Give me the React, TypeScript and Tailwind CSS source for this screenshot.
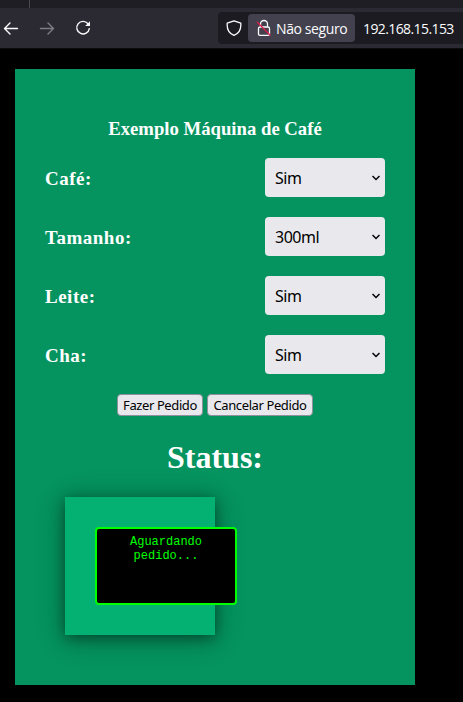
import React from "react";

const rows = [
  { label: "Café:", value: "Sim" },
  { label: "Tamanho:", value: "300ml" },
  { label: "Leite:", value: "Sim" },
  { label: "Cha:", value: "Sim" },
];

function Toolbar() {
  return (
    <header className="font-['Noto_Sans',sans-serif]">
      <div className="h-2 bg-[#1f1e25]">
        <div className="ml-[29px] h-2 w-px bg-[#4a4951]" />
      </div>
      <div className="flex h-10 items-center bg-[#2b2a33]">
        <svg className="ml-[3px] h-4 w-4 shrink-0" viewBox="0 0 16 16" fill="none" stroke="#fbfbfe" strokeWidth="1.4" strokeLinecap="round" strokeLinejoin="round">
          <path d="M14.5 8.5H1.5M7 3L1.5 8.5L7 14" />
        </svg>
        <svg className="ml-5 h-4 w-4 shrink-0" viewBox="0 0 16 16" fill="none" stroke="#7d7c83" strokeWidth="1.4" strokeLinecap="round" strokeLinejoin="round">
          <path d="M1.5 8.5H14.5M9 3L14.5 8.5L9 14" />
        </svg>
        <svg className="ml-5 h-4 w-4 shrink-0" viewBox="0 0 16 16" fill="none">
          <path d="M13 3.7A6.3 6.3 0 1 0 14.3 8.6" stroke="#fbfbfe" strokeWidth="1.4" strokeLinecap="round" />
          <path d="M15 1.2V6H10.2Z" fill="#fbfbfe" />
        </svg>
        <div className="ml-[127px] flex h-8 flex-1 items-center rounded-l bg-[#1c1b22]">
          <svg className="ml-2 h-4 w-4 shrink-0" viewBox="0 0 16 16" fill="none" stroke="#fbfbfe" strokeWidth="1.3" strokeLinejoin="round">
            <path d="M8 0.8L14.8 3.2C15.2 8.5 13 13.4 8 15.4C3 13.4 0.8 8.5 1.2 3.2Z" />
          </svg>
          <div className="ml-1.5 flex h-7 w-[107px] shrink-0 items-center rounded bg-[#42414d]">
            <svg className="ml-2 h-4 w-4 shrink-0 overflow-visible" viewBox="0 0 16 16" fill="none">
              <path d="M4.5 7V4A3.5 3.5 0 0 1 11.5 4V7M4 7H12Q13.5 7 13.5 8.5V14Q13.5 15.3 12 15.3H4Q2.5 15.3 2.5 14V8.5Q2.5 7 4 7Z" stroke="#fbfbfe" strokeWidth="1.3" />
              <path d="M1 2L14.5 15.5" stroke="#e21b4b" strokeWidth="1.3" />
            </svg>
            <span className="ml-1 whitespace-nowrap pt-0.5 font-['Open_Sans',sans-serif] text-[14px] leading-5 tracking-[-0.4px] text-[#fbfbfe]">Não seguro</span>
          </div>
          <span className="ml-2 whitespace-nowrap pt-0.5 font-['Open_Sans',sans-serif] text-[14px] leading-5 tracking-[-0.6px] text-[#fbfbfe]">192.168.15.153</span>
        </div>
      </div>
      <div className="h-px bg-[#0c0c0d]" />
    </header>
  );
}

export default function App() {
  return (
    <div className="h-[702px] w-[463px] overflow-hidden bg-black">
      <Toolbar />
      <main className="ml-[15px] mt-5 h-[616px] w-[400px] bg-[#05935f] px-[30px] pt-[49px] font-['Liberation_Serif',serif] font-bold text-white">
        <h1 className="h-10 whitespace-nowrap text-center text-[18.72px] leading-[22px]">Exemplo Máquina de Café</h1>
        <div className="flex flex-col gap-5">
          {rows.map((row) => (
            <div key={row.label} className="flex h-[39px] items-center justify-between">
              <span className="pt-0.5 text-[19px] leading-[22px] tracking-[0.5px]">{row.label}</span>
              <button className="flex h-[39px] w-[120px] items-center justify-between rounded bg-[#e9e9ed] pl-2.5 pr-[5px] font-['Noto_Sans',sans-serif] text-base font-normal text-black">
                <span className="tracking-[-0.5px]">{row.value}</span>
                <svg className="h-[6px] w-2" viewBox="0 0 8 6" fill="none" stroke="#000" strokeWidth="1.5">
                  <path d="M0.5 1L4 4.5L7.5 1" />
                </svg>
              </button>
            </div>
          ))}
        </div>
        <div className="ml-[72px] mt-5 flex gap-1 font-['Noto_Sans',sans-serif] text-[13px] font-normal leading-[18px] text-black">
          <button className="h-[22px] w-[86px] whitespace-nowrap rounded border border-[#8f8f9d] bg-[#e9e9ed] tracking-[-0.4px]">Fazer Pedido</button>
          <button className="h-[22px] w-[106px] whitespace-nowrap rounded border border-[#8f8f9d] bg-[#e9e9ed] tracking-[-0.4px]">Cancelar Pedido</button>
        </div>
        <h2 className="mt-[23px] h-[58px] text-center text-[32px] leading-[37px]">Status:</h2>
        <div className="ml-5 h-[138px] w-[150px] bg-[#04b072] p-[30px] shadow-[0_3px_14px_rgba(0,0,0,0.45),0_4px_30px_rgba(0,0,0,0.2)]">
          <div className="h-[78px] w-[142px] rounded border-2 border-[#00ff00] bg-black px-2 pt-[6px] text-center font-['Liberation_Mono',monospace] text-[12px] font-normal leading-[14px] text-[#00ff00]">
            Aguardando<br />pedido...
          </div>
        </div>
      </main>
    </div>
  );
}
